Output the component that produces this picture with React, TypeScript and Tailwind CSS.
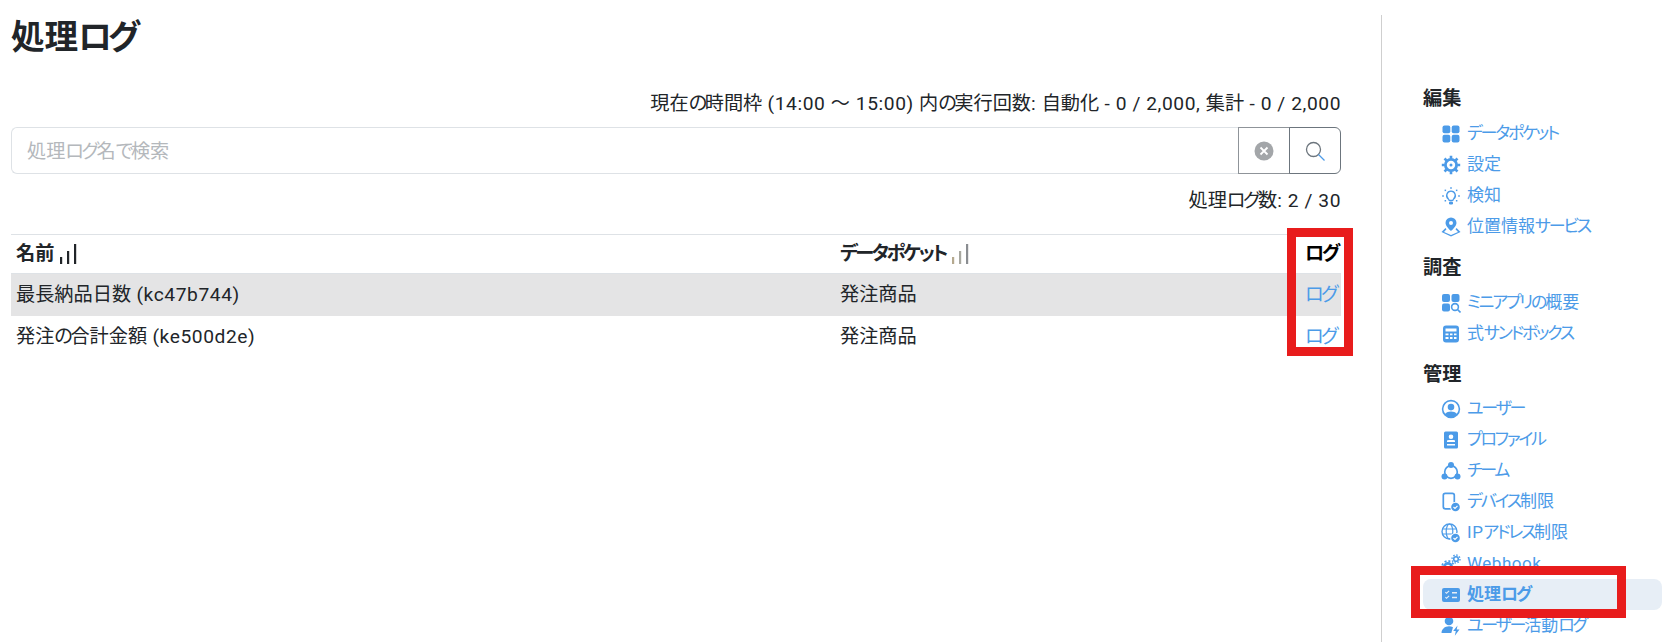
const font = { fontFamily: 'Roboto, "Noto Sans CJK JP", sans-serif' };

function T({ children }: { children: string }) {
  const parts = children.split(/([ぁ-んァ-ヶー]+|[\x20-\x7e〜]+)/).filter(Boolean);
  return (
    <>
      {parts.map((p, i) =>
        /^[ぁ-んァ-ヶー]/.test(p) ? (
          <span key={i} className="tracking-[-0.13em]">{p}</span>
        ) : /^[\x20-\x7e〜]/.test(p) ? (
          <span key={i} className="tracking-[0.03em]">{p}</span>
        ) : (
          <span key={i}>{p}</span>
        )
      )}
    </>
  );
}

function I({ children }: { children: React.ReactNode }) {
  return (
    <svg viewBox="0 0 20 20" className="w-[20px] h-[20px] shrink-0" fill="#4c9be8">
      {children}
    </svg>
  );
}

const B = "#4c9be8";
const icons: Record<string, React.ReactNode> = {
  grid: (<><rect x="1.500" y="1.500" width="7.800" height="7.800" rx="2" /><rect x="10.700" y="1.500" width="7.800" height="7.800" rx="2" /><rect x="1.500" y="10.700" width="7.800" height="7.800" rx="2" /><rect x="10.700" y="10.700" width="7.800" height="7.800" rx="2" /></>),
  gear: (<><circle cx="10" cy="10" r="5.600" fill="none" stroke={B} strokeWidth="2.800" /><circle cx="10" cy="10" r="1.500" /><path d="M10 .8v3M10 16.200v3M.8 10h3M16.200 10h3M3.500 3.500l2.200 2.200M14.300 14.300l2.200 2.200M16.500 3.500l-2.200 2.200M5.700 14.300l-2.200 2.200" stroke={B} strokeWidth="2.600" /></>),
  bulb: (<><path fillRule="evenodd" d="M10 4.500a5 5 0 00-3 9l.8 1.500h4.400l.8-1.500a5 5 0 00-3-9zm0 1.300a3.700 3.700 0 012.200 6.600l-.8 1.300H8.600l-.8-1.300A3.700 3.700 0 0110 5.800z" /><rect x="8" y="15.500" width="4" height="3" rx="1.200" /><rect x="9.400" y="1" width="1.200" height="2" /><rect x="1" y="9.400" width="2" height="1.200" /><rect x="17" y="9.400" width="2" height="1.200" /><rect x="3.600" y="3.600" width="1.500" height="1.500" /><rect x="14.900" y="3.600" width="1.500" height="1.500" /><rect x="3.600" y="14" width="1.500" height="1.500" /><rect x="14.900" y="14" width="1.500" height="1.500" /></>),
  pin: (<><path fillRule="evenodd" d="M10 0.500a5.500 5.500 0 00-5.500 5.500C4.500 9.500 10 14 10 14s5.500-4.500 5.500-8A5.500 5.500 0 0010 0.500zm0 3.500a2 2 0 110 4 2 2 0 010-4z" /><path d="M4.500 11L.5 15l9.500 4.500L19.500 15l-4-4-1 1.200L17 15l-7 3-7-3 2.500-2.800z" /></>),
  gridSearch: (<><rect x="1" y="1" width="8" height="8" rx="2" /><rect x="10.500" y="1" width="8" height="8" rx="2" /><rect x="1" y="10.500" width="8" height="8" rx="2" /><circle cx="14" cy="14" r="3.400" fill="none" stroke={B} strokeWidth="1.600" /><path d="M16.500 16.500L19.500 19.500" stroke={B} strokeWidth="1.600" /></>),
  calc: (<path fillRule="evenodd" d="M5 1.500h10a3 3 0 013 3v11a3 3 0 01-3 3H5a3 3 0 01-3-3v-11a3 3 0 013-3zm-.5 3v3h11v-3zm0 5v1.800h3V9.500zm4.500 0v1.800h2.500V9.500zm4 0v1.800h2.500V9.500zm-8.500 3.500v2h3v-2zm4.500 0v2h2.500v-2zm4 0v2h2.500v-2z" />),
  user: (<path fillRule="evenodd" d="M10 .8a9.200 9.200 0 100 18.400A9.200 9.200 0 0010 .8zm0 1.700a7.500 7.500 0 015.800 12.200c-1.300-1.500-3.400-2.300-5.800-2.300s-4.500.8-5.800 2.300A7.500 7.500 0 0110 2.500zM10 4.800a3.300 3.300 0 100 6.600 3.300 3.300 0 000-6.600z" />),
  profile: (<path fillRule="evenodd" d="M4.500 1.500h11A1.500 1.500 0 0117 3v14a1.500 1.500 0 01-1.500 1.500h-11A1.500 1.500 0 013 17V3a1.500 1.500 0 011.500-1.500zM10 4.500a2.300 2.300 0 100 4.600 2.300 2.300 0 000-4.600zM6 10.500V12h8v-1.500c-1-.6-6-.6-8 0zM6 14v1.500h8V14z" />),
  team: (<><circle cx="10" cy="11" r="6.300" fill="none" stroke={B} strokeWidth="1.700" /><circle cx="10" cy="4" r="3" /><circle cx="3.500" cy="15.500" r="3" /><circle cx="16.500" cy="15.500" r="3" /></>),
  device: (<><rect x="2.300" y="1.300" width="11" height="15.500" rx="2" fill="none" stroke={B} strokeWidth="1.700" /><circle cx="14.500" cy="15" r="5.300" fill="#fff" /><circle cx="14.500" cy="15" r="4.300" /><path d="M12.500 15l1.500 1.500 2.500-2.700" fill="none" stroke="#fff" strokeWidth="1.200" /></>),
  globe: (<><circle cx="8.500" cy="8.500" r="7.500" fill="none" stroke={B} strokeWidth="1.400" /><ellipse cx="8.500" cy="8.500" rx="3.300" ry="7.500" fill="none" stroke={B} strokeWidth="1.200" /><path d="M1.500 6h14M1.500 11h14" stroke={B} strokeWidth="1.200" /><circle cx="14.500" cy="15" r="5.300" fill="#fff" /><circle cx="14.500" cy="15" r="4.300" /><path d="M12.500 15l1.500 1.500 2.500-2.700" fill="none" stroke="#fff" strokeWidth="1.200" /></>),
  hook: (<><circle cx="7" cy="13" r="3.600" fill="none" stroke={B} strokeWidth="2.800" /><circle cx="7" cy="13" r="6" fill="none" stroke={B} strokeWidth="1.800" strokeDasharray="2 2" /><circle cx="15" cy="5" r="2.300" fill="none" stroke={B} strokeWidth="1.600" /><circle cx="15" cy="5" r="4" fill="none" stroke={B} strokeWidth="1.400" strokeDasharray="1.500 1.600" /></>),
  log: (<path fillRule="evenodd" d="M3 3h14a2 2 0 012 2v10a2 2 0 01-2 2H3a2 2 0 01-2-2V5a2 2 0 012-2zm1 4.500l1.500 1.500L8.500 6.300l-.8-.8-2.200 2-.7-.8zm0 5l1.500 1.500 3-2.700-.8-.8-2.200 2-.7-.8zM11 7v1.400h5V7zm0 4.800v1.400h5v-1.400z" />),
  activity: (<><circle cx="8" cy="5" r="4.300" /><path d="M.5 17c0-4 3.300-6.800 7.500-6.800 1.500 0 2.800.3 4 1L10.300 17z" /><path d="M16.500 9.500l-4.300 5.500h2.600l-1 4.800 4.700-6.300h-2.800z" /></>),
};

type Item = { icon: string; label: string; active?: boolean };
const sections: { title: string; ul: string; items: Item[] }[] = [
  { title: "編集", ul: "mt-[4px]", items: [
    { icon: "grid", label: "データポケット" },
    { icon: "gear", label: "設定" },
    { icon: "bulb", label: "検知" },
    { icon: "pin", label: "位置情報サービス" },
  ]},
  { title: "調査", ul: "mt-[4px]", items: [
    { icon: "gridSearch", label: "ミニアプリの概要" },
    { icon: "calc", label: "式サンドボックス" },
  ]},
  { title: "管理", ul: "mt-[3px]", items: [
    { icon: "user", label: "ユーザー" },
    { icon: "profile", label: "プロファイル" },
    { icon: "team", label: "チーム" },
    { icon: "device", label: "デバイス制限" },
    { icon: "globe", label: "IPアドレス制限" },
    { icon: "hook", label: "Webhook" },
    { icon: "log", label: "処理ログ", active: true },
    { icon: "activity", label: "ユーザー活動ログ" },
  ]},
];

function Bars({ muted }: { muted?: boolean }) {
  const c = muted ? "#8a8d91" : "#212529";
  return (
    <svg viewBox="0 0 18 20" className="w-[18px] h-[20px] inline-block ml-[5px]" fill={c}>
      <rect x="1" y="13" width="2.200" height="7" fill={muted ? "#b5a98f" : c} />
      <rect x="8" y="7" width="2.200" height="13" fill={muted ? "#a8a8a0" : c} />
      <rect x="15" y="0" width="2.200" height="20" />
    </svg>
  );
}

export default function App() {
  return (
    <div style={font} className="relative flex h-[642px] w-[1676px] overflow-hidden bg-white text-[#212529] text-[19.2px] [font-feature-settings:'palt']">
      <main className="w-[1330px] ml-[11px] shrink-0">
        <h1 className="pt-[16px] h-[91px] text-[33.6px] leading-[44px] font-bold"><T>処理ログ</T></h1>
        <p className="text-right h-[24px] leading-[26px]"><T>現在の時間枠 (14:00 〜 15:00) 内の実行回数: 自動化 - 0 / 2,000, 集計 - 0 / 2,000</T></p>
        <div className="mt-[12px] flex h-[47px]">
          <div className="flex-1 border border-[#dee2e6] rounded-l-[6px] border-r-0 pl-[15px] pt-[3px] flex items-center text-[#b4b8bc]"><span><T>処理ログ名で検索</T></span></div>
          <button className="w-[52px] border border-[#8f9499] flex items-center justify-center">
            <svg viewBox="0 0 20 20" className="w-[20px] h-[20px]">
              <circle cx="10" cy="10" r="9.500" fill="#a3a6a9" />
              <path d="M6.500 6.500l7 7M13.500 6.500l-7 7" stroke="#fff" strokeWidth="1.800" />
            </svg>
          </button>
          <button className="w-[52px] -ml-px border border-[#6c757d] rounded-r-[6px] flex items-center justify-center">
            <svg viewBox="0 0 20 20" className="w-[20px] h-[20px]" fill="none" stroke="#6c757d" strokeWidth="1.300">
              <circle cx="8.500" cy="8.500" r="7" />
              <path d="M13.500 13.500l6 6" stroke="#4c9be8" />
            </svg>
          </button>
        </div>
        <p className="text-right mt-[14px] h-[24px] leading-[25px]"><T>処理ログ数: 2 / 30</T></p>
        <table className="mt-[22px] w-full border-collapse table-fixed">
          <thead>
            <tr className="h-[39px] border-t border-b border-[#dee2e6] text-left">
              <th className="pl-[5px] pt-[1px] font-bold w-[824px]"><span className="inline-flex items-center"><T>名前</T><Bars /></span></th>
              <th className="pl-[5px] pt-[1px] font-bold"><span className="inline-flex items-center"><span><T>データポケット</T></span><Bars muted /></span></th>
              <th className="pl-[5px] pt-[1px] w-[41px] font-bold text-black whitespace-nowrap"><T>ログ</T></th>
            </tr>
          </thead>
          <tbody>
            {[
              ["最長納品日数 (kc47b744)", "bg-[#e4e4e5]"],
              ["発注の合計金額 (ke500d2e)", ""],
            ].map(([n, bg]) => (
              <tr key={n} className={`h-[42px] ${bg}`}>
                <td className="pl-[5px] pt-[2px]"><T>{n}</T></td>
                <td className="pl-[5px] pt-[2px]"><T>発注商品</T></td>
                <td className="pl-[5px] pt-[2px] text-[#4c9be8] whitespace-nowrap"><T>ログ</T></td>
              </tr>
            ))}
          </tbody>
        </table>
      </main>

      <aside className="ml-[40px] mt-[15px] pl-[41px] pr-[14px] border-l border-[#cfcfcf] w-[295px] shrink-0">
        <div className="pt-[67px]">
          {sections.map((s) => (
            <div key={s.title} className="mb-[9px]">
              <h2 className="text-[19.2px] pt-[2px] leading-[30px] font-bold">{s.title}</h2>
              <ul className={s.ul}>
                {s.items.map((it) => (
                  <li key={it.label} className={`flex items-center gap-[6px] h-[31px] pl-[18px] rounded-[8px] text-[17px] text-[#4c9be8] whitespace-nowrap ${it.active ? "bg-[#e7eef6] font-bold" : ""}`}>
                    <I>{icons[it.icon]}</I>
                    <span><T>{it.label}</T></span>
                  </li>
                ))}
              </ul>
            </div>
          ))}
        </div>
      </aside>

      <div className="absolute left-[1287px] top-[228px] w-[66px] h-[128px] border-[9px] border-[#e81c1c]" />
      <div className="absolute left-[1411px] top-[566px] w-[215px] h-[52px] border-[9px] border-[#e81c1c]" />
    </div>
  );
}
